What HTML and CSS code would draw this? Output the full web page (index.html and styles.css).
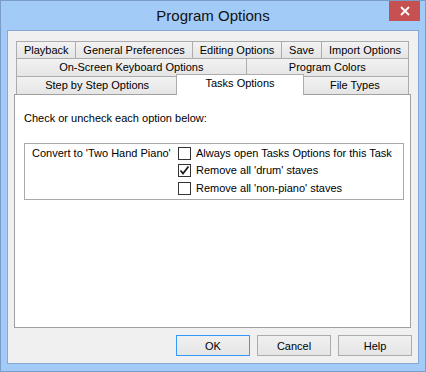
FILE: index.html
```html
<!DOCTYPE html>
<html lang="en">
<head>
    <meta charset="UTF-8">
    <title>Program Options</title>
    <link rel="stylesheet" href="styles.css">
</head>
<body>
    <div class="window">
        <div class="titlebar">
            <span class="title">Program Options</span>
            <button class="close" aria-label="Close">
                <svg width="10" height="10" viewBox="0 0 10 10">
                    <path d="M1 1 L9 9 M9 1 L1 9" stroke="#fff" stroke-width="1.8" fill="none"/>
                </svg>
            </button>
        </div>

        <div class="client">
            <div class="tabs">
                <div class="tab-row">
                    <div class="tab">Playback</div>
                    <div class="tab">General Preferences</div>
                    <div class="tab">Editing Options</div>
                    <div class="tab">Save</div>
                    <div class="tab">Import Options</div>
                </div>
                <div class="tab-row">
                    <div class="tab">On-Screen Keyboard Options</div>
                    <div class="tab">Program Colors</div>
                </div>
                <div class="tab-row">
                    <div class="tab">Step by Step Options</div>
                    <div class="tab tab-active">Tasks Options</div>
                    <div class="tab">File Types</div>
                </div>

                <div class="panel">
                    <p class="hint">Check or uncheck each option below:</p>

                    <div class="group">
                        <div class="group-label">Convert to 'Two Hand Piano'</div>
                        <div class="options">
                            <label class="option">
                                <span class="box"></span>
                                Always open Tasks Options for this Task
                            </label>
                            <label class="option">
                                <span class="box">
                                    <svg width="11" height="11" viewBox="0 0 11 11">
                                        <path d="M1.5 5.5 L4 8.5 L9.5 1.5" stroke="#1e1e1e" stroke-width="1.8" fill="none"/>
                                    </svg>
                                </span>
                                Remove all 'drum' staves
                            </label>
                            <label class="option">
                                <span class="box"></span>
                                Remove all 'non-piano' staves
                            </label>
                        </div>
                    </div>
                </div>
            </div>

            <div class="buttons">
                <button class="btn btn-default">OK</button>
                <button class="btn">Cancel</button>
                <button class="btn">Help</button>
            </div>
        </div>
    </div>
</body>
</html>
```

FILE: styles.css
```css
* {
    margin: 0;
    padding: 0;
    box-sizing: border-box;
}

body {
    font-family: "Liberation Sans", Arial, sans-serif;
    font-size: 11px;
    color: #000;
    background: #a3cbf7;
}

.window {
    width: 426px;
    height: 372px;
    background: #a3cbf7;
    border: 1px solid #7a9cc6;
}

/* title bar */
.titlebar {
    height: 29px;
    display: grid;
    grid-template-columns: 1fr auto 1fr;
}

.title {
    grid-column: 2;
    font-size: 15px;
    line-height: 29px;
    color: #111;
}

.close {
    grid-column: 3;
    justify-self: end;
    align-self: start;
    width: 31px;
    height: 20px;
    margin-right: 5px;
    border: none;
    background: #c75050;
    display: flex;
    align-items: center;
    justify-content: center;
}

/* client area */
.client {
    margin: 0 6px;
    height: 334px;
    background: #f0f0f0;
    border: 1px solid #86a9d4;
    padding: 10px 6px 7px 6px;
    display: flex;
    flex-direction: column;
}

.tabs {
    margin-right: 1px;
}

.tab-row {
    display: flex;
    align-items: flex-end;
    height: 18px;
    padding: 0 2px 0 3px;
}

.tab-row:first-child {
    height: 17px;
}

.tab {
    flex: 1 1 auto;
    height: 18px;
    margin-left: -1px;
    border: 1px solid #acacac;
    border-bottom: none;
    background: linear-gradient(#f2f2f2, #e5e5e5);
    text-align: center;
    line-height: 16px;
    white-space: nowrap;
    padding: 0 6px;
}

.tab-row:first-child .tab {
    height: 17px;
    line-height: 16px;
}

.tab-active {
    position: relative;
    z-index: 1;
    height: 21px;
    margin: 0 -2px -1px -2px;
    background: #fff;
    line-height: 17px;
}

.panel {
    height: 234px;
    background: #fff;
    border: 1px solid #a0a0a0;
    padding: 16px 6px 0 9px;
}

.hint {
    line-height: 14px;
}

.group {
    margin-top: 18px;
    height: 57px;
    border: 1px solid #a9a9a9;
    padding: 3px 0 0 7px;
    display: flex;
}

.group-label {
    width: 146px;
    line-height: 13px;
}

.options {
    display: flex;
    flex-direction: column;
}

.option {
    display: flex;
    align-items: flex-start;
    gap: 5px;
    height: 18px;
    line-height: 13px;
}

.box {
    width: 13px;
    height: 13px;
    border: 1px solid #333;
    background: #fff;
    display: flex;
    align-items: center;
    justify-content: center;
}

/* dialog buttons */
.buttons {
    display: flex;
    justify-content: flex-end;
    gap: 7px;
    margin-top: 7px;
}

.btn {
    width: 74px;
    height: 21px;
    font-family: inherit;
    font-size: 11px;
    color: #000;
    border: 1px solid #acacac;
    background: linear-gradient(#f0f0f0, #e5e5e5);
}

.btn-default {
    border-color: #3399ff;
}
```
